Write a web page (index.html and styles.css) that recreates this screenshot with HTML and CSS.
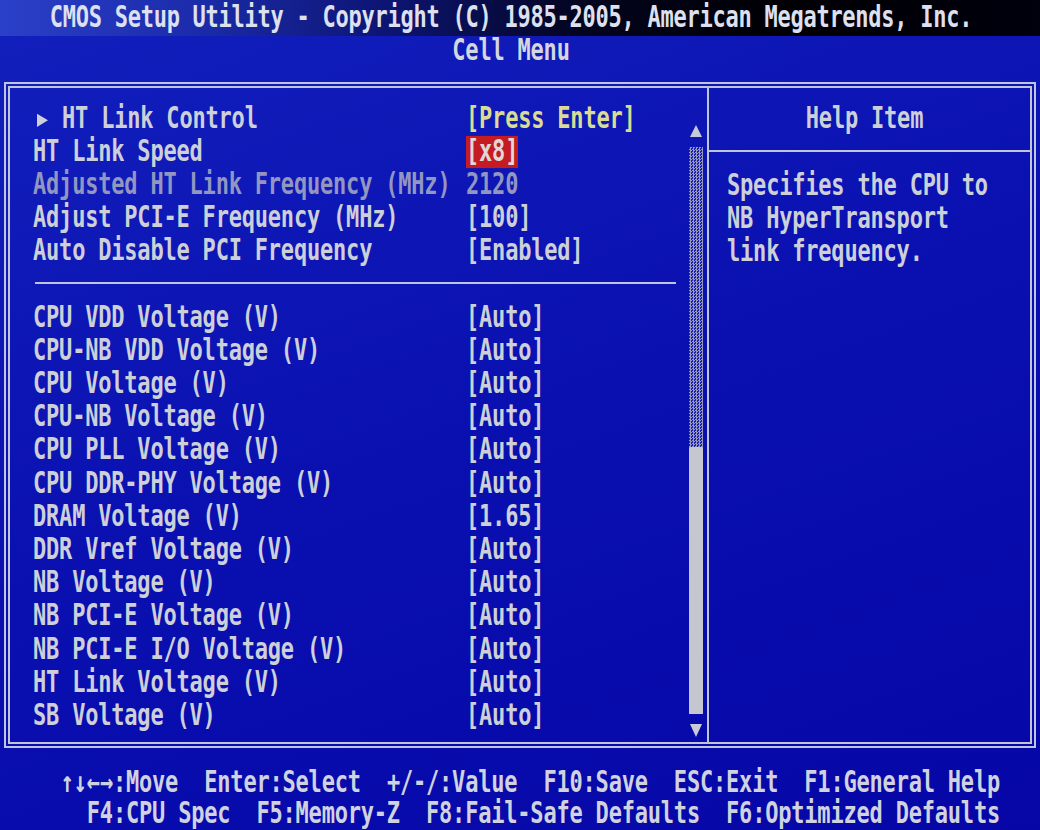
FILE: index.html
```html
<!DOCTYPE html>
<html lang="en">
<head>
    <meta charset="UTF-8">
    <meta name="viewport" content="width=device-width, initial-scale=1.0">
    <title>CMOS Setup Utility - Cell Menu</title>
    <link rel="stylesheet" href="styles.css">
</head>
<body>
    <header class="title-bar">
        <span class="t">CMOS Setup Utility - Copyright (C) 1985-2005, American Megatrends, Inc.</span>
    </header>
    <div class="menu-name"><span class="t">Cell Menu</span></div>

    <div class="frame">
        <div class="settings">
            <div class="list">
                <div class="row"><span class="label submenu">HT Link Control</span><span class="value yellow">[Press Enter]</span></div>
                <div class="row"><span class="label">HT Link Speed</span><span class="value active">[x8]</span></div>
                <div class="row disabled"><span class="label">Adjusted HT Link Frequency (MHz)</span><span class="value">2120</span></div>
                <div class="row"><span class="label">Adjust PCI-E Frequency (MHz)</span><span class="value">[100]</span></div>
                <div class="row"><span class="label">Auto Disable PCI Frequency</span><span class="value">[Enabled]</span></div>
                <div class="sep"></div>
                <div class="row"><span class="label">CPU VDD Voltage (V)</span><span class="value">[Auto]</span></div>
                <div class="row"><span class="label">CPU-NB VDD Voltage (V)</span><span class="value">[Auto]</span></div>
                <div class="row"><span class="label">CPU Voltage (V)</span><span class="value">[Auto]</span></div>
                <div class="row"><span class="label">CPU-NB Voltage (V)</span><span class="value">[Auto]</span></div>
                <div class="row"><span class="label">CPU PLL Voltage (V)</span><span class="value">[Auto]</span></div>
                <div class="row"><span class="label">CPU DDR-PHY Voltage (V)</span><span class="value">[Auto]</span></div>
                <div class="row"><span class="label">DRAM Voltage (V)</span><span class="value">[1.65]</span></div>
                <div class="row"><span class="label">DDR Vref Voltage (V)</span><span class="value">[Auto]</span></div>
                <div class="row"><span class="label">NB Voltage (V)</span><span class="value">[Auto]</span></div>
                <div class="row"><span class="label">NB PCI-E Voltage (V)</span><span class="value">[Auto]</span></div>
                <div class="row"><span class="label">NB PCI-E I/O Voltage (V)</span><span class="value">[Auto]</span></div>
                <div class="row"><span class="label">HT Link Voltage (V)</span><span class="value">[Auto]</span></div>
                <div class="row"><span class="label">SB Voltage (V)</span><span class="value">[Auto]</span></div>
            </div>

            <div class="scrollbar">
                <svg class="arrow" width="14" height="12" viewBox="0 0 14 12"><polygon points="7,0 13,12 1,12" fill="#c8cad8"/></svg>
                <div class="track"><div class="thumb"></div></div>
                <svg class="arrow" width="14" height="13" viewBox="0 0 14 13"><polygon points="1,0 13,0 7,13" fill="#c8cad8"/></svg>
            </div>
        </div>

        <div class="help">
            <div class="help-title"><span class="t">Help Item</span></div>
            <div class="help-text">
                <div class="line"><span class="t">Specifies the CPU to</span></div>
                <div class="line"><span class="t">NB HyperTransport</span></div>
                <div class="line"><span class="t">link frequency.</span></div>
            </div>
        </div>
    </div>

    <footer class="keys">
        <div class="line"><span class="t">↑↓←→:Move  Enter:Select  +/-/:Value  F10:Save  ESC:Exit  F1:General Help</span></div>
        <div class="line"><span class="t">F4:CPU Spec  F5:Memory-Z  F8:Fail-Safe Defaults  F6:Optimized Defaults</span></div>
    </footer>
</body>
</html>
```

FILE: styles.css
```css
* {
    margin: 0;
    padding: 0;
    box-sizing: border-box;
}

body {
    width: 1040px;
    height: 830px;
    overflow: hidden;
    background: linear-gradient(160deg, #1220bc 0%, #0a10b0 50%, #0606a6 100%);
    color: #cdd0d8;
    font-family: "DejaVu Sans Mono", "Liberation Mono", monospace;
    font-weight: bold;
    font-size: 22px;
    letter-spacing: -0.2px;
}

/* BIOS glyphs are tall and narrow */
.t {
    display: inline-block;
    transform: scaleY(1.34);
}

.title-bar {
    height: 36px;
    line-height: 36px;
    text-align: center;
    padding-right: 18px;
    color: #dde0ee;
    letter-spacing: -0.25px;
    background: linear-gradient(90deg, #2a40c8 0%, #1c2cac 18%, #0c1470 38%, #03041e 56%, #000004 75%, #00000e 100%);
}

.menu-name {
    height: 30px;
    line-height: 30px;
    text-align: center;
    padding-right: 18px;
    margin-bottom: 16px;
    color: #d4d6e0;
}

.frame {
    display: flex;
    width: 1032px;
    height: 666px;
    margin-left: 4px;
    border: 6px double #c0c4d8;
}

.settings {
    display: flex;
    width: 699px;
    padding: 14px 4px 0 23px;
    border-right: 2px solid #c0c4d8;
}

.list {
    flex: 1;
}

.row {
    display: grid;
    grid-template-columns: 433px auto;
    align-items: center;
    height: 33.2px;
}

.row > span {
    display: block;
    justify-self: start;
    line-height: 24px;
    white-space: pre;
    transform: scaleY(1.34);
}

.submenu::before {
    content: "";
    display: inline-block;
    width: 0;
    height: 0;
    margin: 0 14px 0 4px;
    border-top: 5.5px solid transparent;
    border-bottom: 5.5px solid transparent;
    border-left: 11px solid #cdd0d8;
    vertical-align: 1px;
}

.yellow {
    color: #dadc96;
}

.active {
    background: #c41c22;
    color: #e2d6d6;
}

.disabled {
    color: #9296c0;
}

.sep {
    display: flex;
    align-items: center;
    height: 33.2px;
}

.sep::after {
    content: "";
    width: 641px;
    height: 2px;
    margin: -4px 0 0 2px;
    background: #c0c4d8;
}

.scrollbar {
    display: flex;
    flex-direction: column;
    width: 14px;
    padding-top: 23px;
}

.scrollbar .arrow {
    display: block;
}

.track {
    display: flex;
    flex-direction: column;
    justify-content: flex-end;
    height: 567px;
    margin: 10px 0;
    background-color: #1a1eaa;
    background-image: repeating-conic-gradient(#9498bc 0 25%, #1a1eaa 0 50%);
    background-size: 3px 3px;
}

.thumb {
    height: 267px;
    background: #c4c6d0;
    border-radius: 1px;
}

.help {
    flex: 1;
}

.help-title {
    height: 64px;
    line-height: 62px;
    text-align: center;
    padding-right: 10px;
    border-bottom: 2px solid #c0c4d8;
}

.help-text {
    padding: 16px 0 0 18px;
}

.help-text .line {
    height: 33px;
    line-height: 33px;
}

.keys {
    padding: 18px 40px 0 0;
    text-align: right;
    color: #d0d2e0;
}

.keys .line {
    height: 31px;
    line-height: 31px;
    white-space: pre;
}
```
